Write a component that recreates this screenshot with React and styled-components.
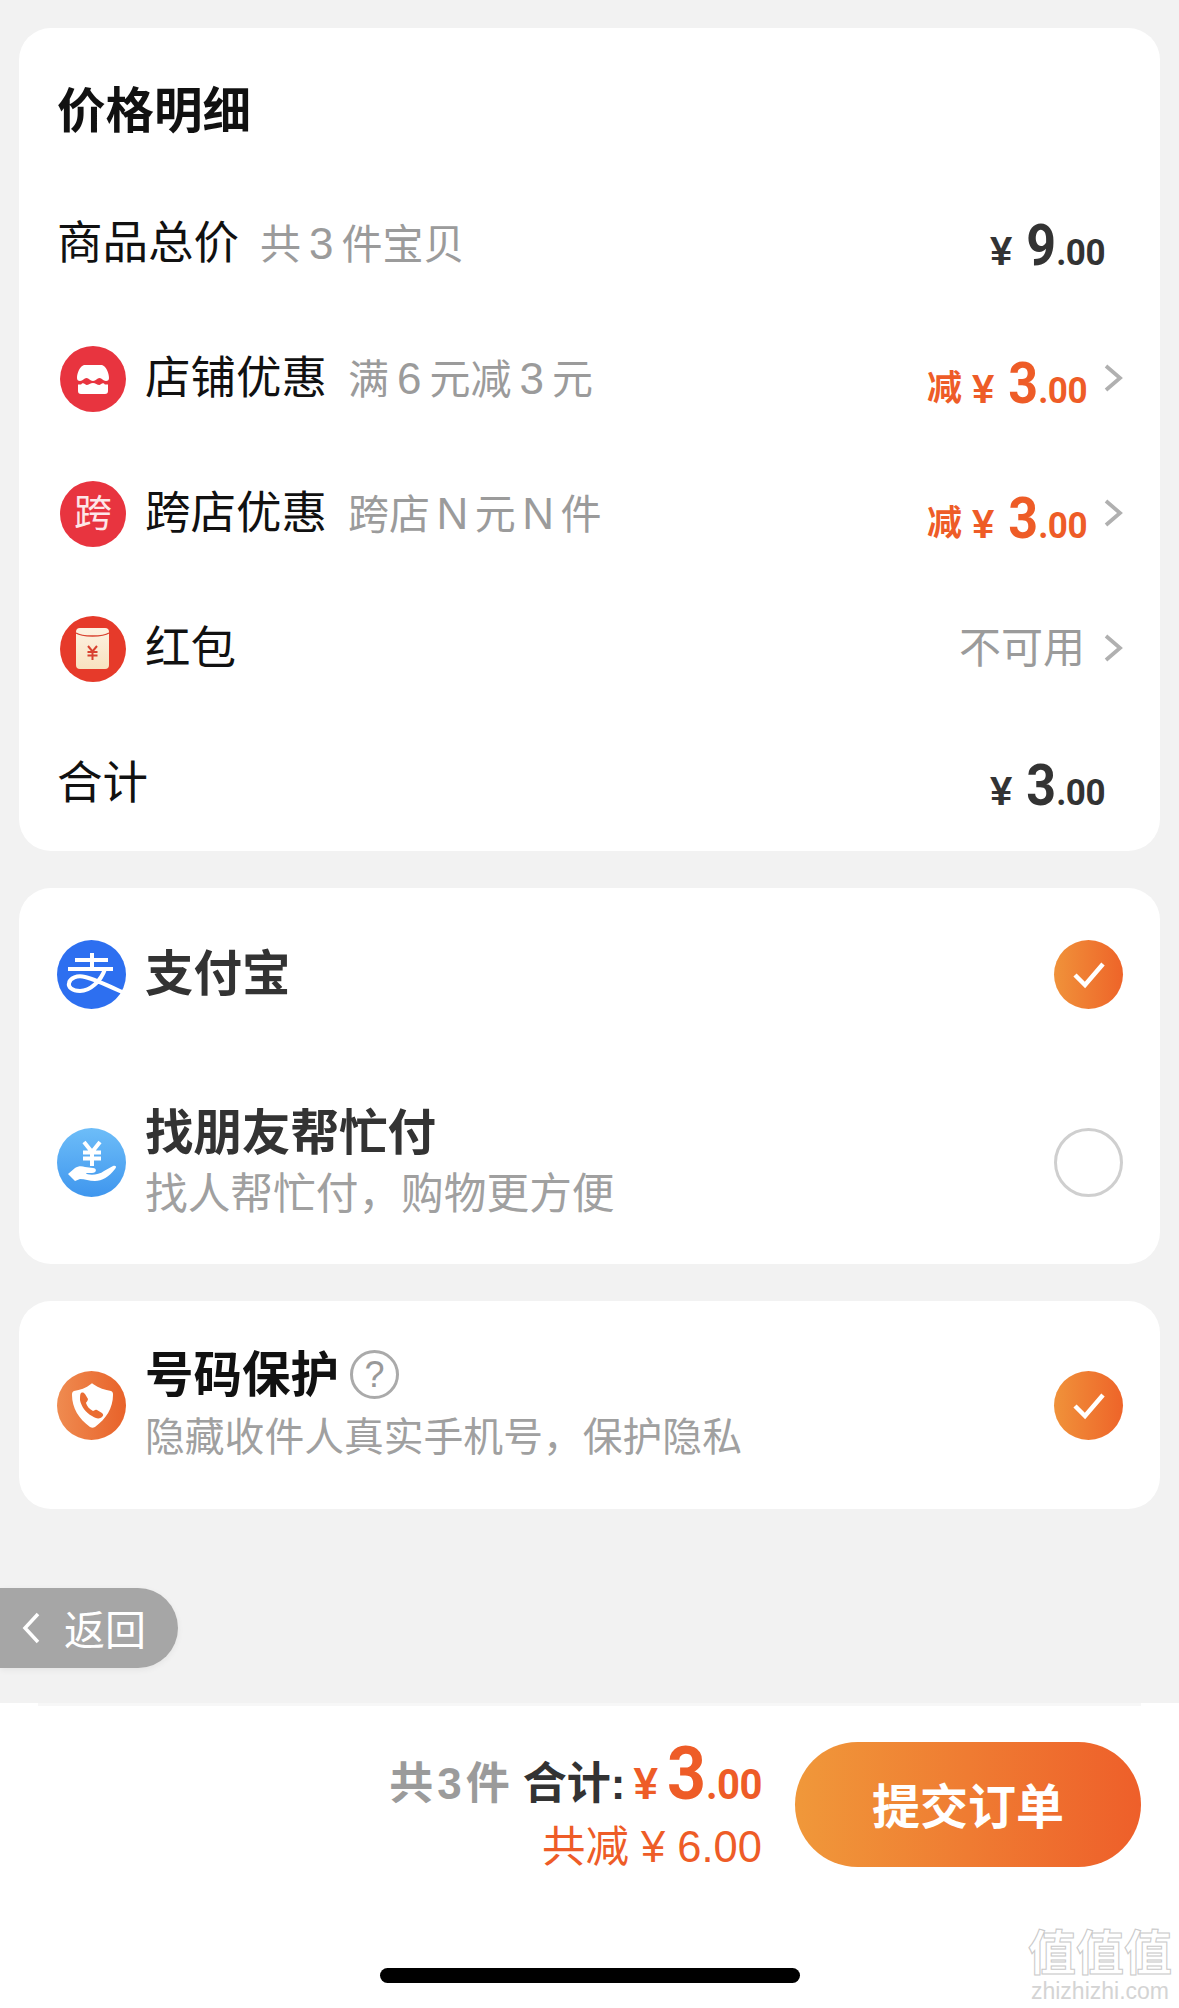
import styled, { createGlobalStyle } from 'styled-components'

const CJK = `"Liberation Sans", "Noto Sans CJK SC", sans-serif`
const NUM = `Roboto, "Liberation Sans", sans-serif`
const ORANGE = '#ee5c27'

const Global = createGlobalStyle`
html, body { margin: 0; padding: 0; background: #f2f2f2; }
* { box-sizing: border-box; }
body { font-family: ${CJK}; }
`
const Page = styled.div`
width: 1179px;
height: 2008px;
background: #f2f2f2;
padding-top: 28px;
display: flex;
flex-direction: column;
overflow: hidden;
`
const Card = styled.div`
margin: 0 19px ${p => p.$mb || 37}px;
background: #fff;
border-radius: 32px;
padding: ${p => p.$pt || 0}px 37px 0 38px;
`
const Heading = styled.div`
height: 132px;
padding-bottom: 6px;
display: flex;
align-items: center;
font-size: 48.500px;
font-weight: 700;
color: #111;
`
const Row = styled.div`
height: ${p => p.$h || 135}px;
display: flex;
align-items: center;
`
const IconWrap = styled.div`
width: ${p => p.$size || 66}px;
height: ${p => p.$size || 66}px;
margin: 0 ${p => p.$gap || 19}px 0 ${p => p.$ml ?? 3}px;
flex-shrink: 0;
& svg { display: block; }
`
const LetterIcon = styled(IconWrap)`
border-radius: 50%;
background: #e8343f;
color: #fde6e8;
font-size: 38px;
line-height: 64px;
text-align: center;
`
const Name = styled.div`
font-size: 45.500px;
color: #111;
line-height: 60px;
`
const Note = styled.div`
font-size: 41px;
color: #9b9b9b;
margin-left: 21px;
margin-top: -6px;
white-space: pre;
`
const NoteNum = styled.span`
font-size: 44px;
padding: 0 ${p => p.$pad || 8}px;
`
const Right = styled.div`
margin-left: auto;
display: flex;
align-items: center;
`
const Price = styled.div`
display: flex;
align-items: baseline;
color: ${p => p.$color || '#333'};
font-family: ${NUM};
font-weight: 700;
margin: ${p => p.$mt || 7}px ${p => p.$mr ?? 18}px 0 0;
`
const Cut = styled.span`
font-family: ${CJK};
font-size: 35px;
margin-right: 10px;
position: relative;
top: -3px;
`
const Yen = styled.span`
font-family: "Liberation Sans", sans-serif;
font-size: ${p => p.$fs || 40}px;
font-weight: 700;
margin-right: ${p => p.$mr || 14}px;
`
const Int = styled.span`
display: inline-block;
font-size: ${p => p.$fs || 52}px;
transform: scaleY(1.1);
transform-origin: 50% 84%;
`
const Dec = styled.span`
display: inline-block;
font-size: ${p => p.$fs || 35}px;
letter-spacing: -0.5px;
transform: scaleY(1.08);
transform-origin: 50% 84%;
`
const Grey = styled.div`
font-size: 42px;
color: #9b9b9b;
margin: -8px 18px 0 0;
`
const Chevron = styled.svg`
display: block;
margin-top: -2px;
`
const TextCol = styled.div`
display: flex;
flex-direction: column;
`
const Title = styled.div`
font-size: 48.500px;
font-weight: 700;
color: ${p => p.$dark ? '#111' : '#333'};
line-height: 60px;
margin-top: ${p => p.$mt || 0}px;
display: flex;
align-items: center;
`
const Sub = styled.div`
font-size: ${p => p.$fs || 42.7}px;
color: #a0a0a0;
line-height: 58px;
margin-top: ${p => p.$mt || 0}px;
`
const Help = styled.span`
width: 49px;
height: 49px;
margin-left: 11px;
border: 3px solid #aaa;
border-radius: 50%;
color: #999;
font-size: 36px;
font-weight: 400;
line-height: 43px;
text-align: center;
`
const Check = styled.div`
margin-left: auto;
width: 69px;
height: 69px;
border-radius: 50%;
flex-shrink: 0;
display: flex;
align-items: center;
justify-content: center;
${p => p.$on
  ? 'background: linear-gradient(90deg, #f0923a, #ee6429);'
  : 'border: 3px solid #cfcfcf;'}
`
const Back = styled.div`
width: 178px;
height: 80px;
margin-top: 78px;
background: #a6a6a6;
border-radius: 0 40px 40px 0;
color: #fff;
font-size: 41px;
display: flex;
align-items: center;
padding-left: 20px;
box-shadow: 0 2px 6px rgba(0,0,0,.06);
`
const BackText = styled.span`
margin: -3px 0 0 22px;
`
const Bar = styled.div`
margin-top: auto;
height: 305px;
background: #fff;
position: relative;
padding: 39px 38px 0 0;
display: flex;
justify-content: flex-end;
gap: 33px;
&::before {
  content: '';
  position: absolute;
  left: 38px;
  right: 38px;
  top: 0;
  height: 3px;
  background: #f7f7f7;
}
`
const Summary = styled.div`
display: flex;
flex-direction: column;
align-items: flex-end;
`
const SumLine = styled.div`
display: flex;
align-items: baseline;
height: 76px;
margin-top: -7px;
font-size: 44px;
white-space: pre;
`
const SumCount = styled.span`
color: #9b9b9b;
font-weight: 700;
margin-right: 13px;
`
const SumNum = styled.span`
padding: 0 4px;
`
const SumLabel = styled.span`
color: #333;
font-weight: 700;
margin-right: 8px;
`
const SumOff = styled.div`
color: ${ORANGE};
font-size: 43.500px;
line-height: 50px;
margin-top: 11px;
white-space: pre;
`
const Submit = styled.div`
width: 346px;
height: 125px;
padding-bottom: 3px;
border-radius: 63px;
background: linear-gradient(90deg, #f0983a, #ee5f2a);
color: #fff;
font-size: 48px;
font-weight: 700;
display: flex;
align-items: center;
justify-content: center;
`
const Home = styled.div`
position: absolute;
left: 380px;
top: 265px;
width: 420px;
height: 15px;
border-radius: 8px;
background: #000;
`
const Mark = styled.div`
position: absolute;
right: 6px;
bottom: 4px;
width: 146px;
text-align: center;
color: #fff;
-webkit-text-stroke: 1px #c9c9c9;
`
const MarkCn = styled.div`
font-size: 48px;
line-height: 48px;
font-weight: 700;
white-space: nowrap;
`
const MarkEn = styled.div`
font-size: 23px;
line-height: 26px;
color: #d4d4d4;
-webkit-text-stroke: 0;
`

const Arrow = () => (
  <Chevron width="20" height="32" viewBox="0 0 20 32">
    <path d="M3 4l14 12L3 28" fill="none" stroke="#b0b0b0" strokeWidth="3.800" />
  </Chevron>
)

const StoreIcon = () => (
  <IconWrap>
    <svg width="66" height="66" viewBox="0 0 66 66">
      <circle cx="33" cy="33" r="33" fill="#e8343f" />
      <path d="M24 19h18c4 1 7 8 7 13 0 2-1 3-3 3-3 0-4-3-6.500-3S36 35 33 35s-4-3-6.500-3S23 35 20 35c-2 0-3-1-3-3 0-5 3-12 7-13z" fill="#fff" />
      <path d="M18 38.500c2 0 3 .5 4-1 2-1 3 1 4.500 1.500 2 0 4-2 6.500-2s4 2 6.500 2c1.500-.5 2.500-2.500 4.500-1.500 1 1.500 2 1 4 1V45c0 2-1 3-3 3H21c-2 0-3-1-3-3z" fill="#fff" />
    </svg>
  </IconWrap>
)

const PacketIcon = () => (
  <IconWrap>
    <svg width="66" height="66" viewBox="0 0 66 66">
      <defs>
        <linearGradient id="pk" x1="0" y1="0" x2="0" y2="1">
          <stop offset="0" stopColor="#fdf2e2" />
          <stop offset="1" stopColor="#f8e2c0" />
        </linearGradient>
      </defs>
      <circle cx="33" cy="33" r="33" fill="#e63a2a" />
      <rect x="16" y="12" width="33" height="41" rx="4" fill="url(#pk)" />
      <path d="M16 17c6 4 27 4 33 0" fill="none" stroke="#d8412f" strokeWidth="1.500" />
      <path d="M28 30l4.500 5.500L37 30M27.500 36h10M27.500 39.500h10M32.500 35.500V44" fill="none" stroke="#d8412f" strokeWidth="2" />
    </svg>
  </IconWrap>
)

const AlipayIcon = () => (
  <IconWrap $size={69} $gap={19} $ml={0}>
    <svg width="69" height="69" viewBox="0 0 69 69">
      <circle cx="34.500" cy="34.500" r="34.500" fill="#2d6ff0" />
      <path d="M18 20h33M11 29h45M35 13v16" fill="none" stroke="#fff" strokeWidth="4" />
      <path d="M48 29C44 41 33 51 23 51c-8 0-12-4-11-8 1-5 8-8 16-6 12 3 26 10 39 16" fill="none" stroke="#fff" strokeWidth="4" />
    </svg>
  </IconWrap>
)

const HelpPayIcon = () => (
  <IconWrap $size={69} $gap={19} $ml={0}>
    <svg width="69" height="69" viewBox="0 0 69 69">
      <defs>
        <linearGradient id="hp" x1="0" y1="0" x2="0" y2="1">
          <stop offset="0" stopColor="#6dbdf8" />
          <stop offset="1" stopColor="#3f96ee" />
        </linearGradient>
      </defs>
      <circle cx="34.500" cy="34.500" r="34.500" fill="url(#hp)" />
      <path d="M27 14l8 10 8-10M26 24.500h18M26 30.500h18M35 24v14" fill="none" stroke="#fff" strokeWidth="4" />
      <path d="M11 46l7-6c3-2 7-2 10-1l8 1c4 0 4 5-1 5h-6c0 2 12 3 18-2l9-5c3-1 4 1 2 3-6 8-13 12-20 12-6 0-10-2-15-2l-5 2z" fill="#fff" />
    </svg>
  </IconWrap>
)

const ShieldIcon = () => (
  <IconWrap $size={69} $gap={19} $ml={0}>
    <svg width="69" height="69" viewBox="0 0 69 69">
      <defs>
        <linearGradient id="sh" x1="0" y1="0" x2="1" y2="0">
          <stop offset="0" stopColor="#ef8b50" />
          <stop offset="1" stopColor="#e8622a" />
        </linearGradient>
      </defs>
      <circle cx="34.500" cy="34.500" r="34.500" fill="url(#sh)" />
      <path d="M36 13c6 4 12 6 18 7 2 1 2 2 2 4 0 13-7 24-18 32-2 1-3 1-5 0-11-8-18-19-18-32 0-2 0-3 2-4 6-1 12-3 17-7 1-1 1-1 2 0z" fill="#fff" />
      <path d="M24 22c2-1 3 0 4 1l3 5c0 2-2 3-2 4 1 3 3 6 7 8 1 0 2-2 4-1l5 3c2 2 1 3 0 4-2 2-6 2-10-1-6-3-11-10-12-16 0-3 0-6 1-7z" fill="#ea6d33" />
    </svg>
  </IconWrap>
)

const CheckMark = () => (
  <svg width="36" height="30" viewBox="0 0 36 30">
    <path d="M4 16l10 10L32 5" fill="none" stroke="#fff" strokeWidth="4.500" />
  </svg>
)

function Money({ value, color, mr, mt, cut }) {
  return (
    <Price $color={color} $mr={mr} $mt={mt}>
      {cut && <Cut>减</Cut>}
      <Yen>¥</Yen>
      <Int>{value}</Int>
      <Dec>.00</Dec>
    </Price>
  )
}

export default function App() {
  return (
    <Page>
      <Global />
      <Card $pt={16} $mb={37}>
        <Heading>价格明细</Heading>
        <Row>
          <Name>商品总价</Name>
          <Note>共<NoteNum>3</NoteNum>件宝贝</Note>
          <Right><Money value="9" /></Right>
        </Row>
        <Row>
          <StoreIcon />
          <Name>店铺优惠</Name>
          <Note>满<NoteNum>6</NoteNum>元减<NoteNum>3</NoteNum>元</Note>
          <Right><Money value="3" color={ORANGE} mr={16} mt={14} cut /><Arrow /></Right>
        </Row>
        <Row>
          <LetterIcon>跨</LetterIcon>
          <Name>跨店优惠</Name>
          <Note>跨店<NoteNum $pad={6.5}>N</NoteNum>元<NoteNum $pad={6.5}>N</NoteNum>件</Note>
          <Right><Money value="3" color={ORANGE} mr={16} mt={14} cut /><Arrow /></Right>
        </Row>
        <Row>
          <PacketIcon />
          <Name>红包</Name>
          <Right><Grey>不可用</Grey><Arrow /></Right>
        </Row>
        <Row>
          <Name>合计</Name>
          <Right><Money value="3" /></Right>
        </Row>
      </Card>

      <Card>
        <Row $h={172}>
          <AlipayIcon />
          <Title>支付宝</Title>
          <Check $on><CheckMark /></Check>
        </Row>
        <Row $h={204}>
          <HelpPayIcon />
          <TextCol>
            <Title $mt={1}>找朋友帮忙付</Title>
            <Sub $mt={2}>找人帮忙付，购物更方便</Sub>
          </TextCol>
          <Check />
        </Row>
      </Card>

      <Card $mb={1}>
        <Row $h={208}>
          <ShieldIcon />
          <TextCol>
            <Title $dark>号码保护<Help>?</Help></Title>
            <Sub $fs={39.8} $mt={3}>隐藏收件人真实手机号，保护隐私</Sub>
          </TextCol>
          <Check $on><CheckMark /></Check>
        </Row>
      </Card>

      <Back>
        <svg width="22" height="36" viewBox="0 0 22 36">
          <path d="M18 4L5 18l13 14" fill="none" stroke="#fff" strokeWidth="3.500" />
        </svg>
        <BackText>返回</BackText>
      </Back>

      <Bar>
        <Summary>
          <SumLine>
            <SumCount>共<SumNum>3</SumNum>件</SumCount>
            <SumLabel>合计:</SumLabel>
            <Price $color={ORANGE} $mr={0} $mt={1}>
              <Yen $fs={44} $mr={9}>¥</Yen>
              <Int $fs={68}>3</Int>
              <Dec $fs={40}>.00</Dec>
            </Price>
          </SumLine>
          <SumOff>共减 ¥ 6.00</SumOff>
        </Summary>
        <Submit>提交订单</Submit>
        <Home />
        <Mark>
          <MarkCn>值值值</MarkCn>
          <MarkEn>zhizhizhi.com</MarkEn>
        </Mark>
      </Bar>
    </Page>
  )
}
